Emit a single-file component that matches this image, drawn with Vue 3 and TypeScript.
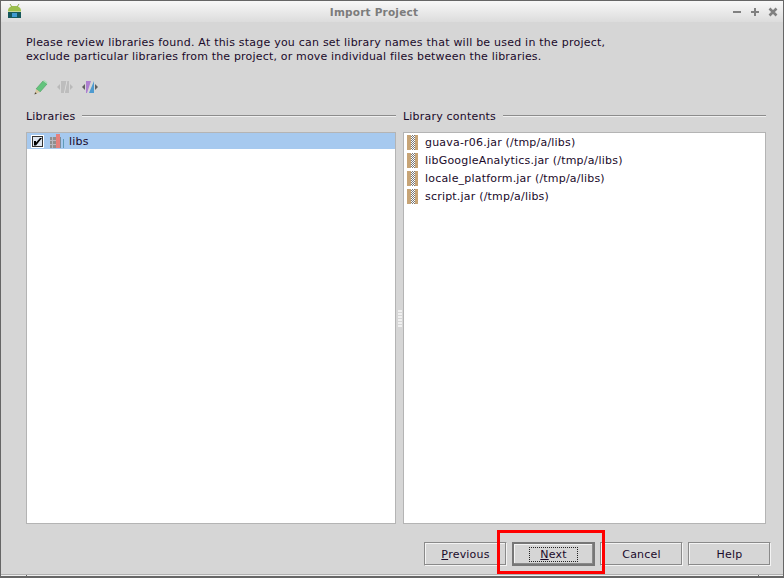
<script setup lang="ts">
const jars: string[] = [
  'guava-r06.jar (/tmp/a/libs)',
  'libGoogleAnalytics.jar (/tmp/a/libs)',
  'locale_platform.jar (/tmp/a/libs)',
  'script.jar (/tmp/a/libs)',
]
</script>

<template>
  <div class="window">
    <header class="titlebar">
      <svg class="logo" width="13" height="14" viewBox="0 0 13 14">
        <path d="M0 7C0 4 2 2 6.500 2S13 4 13 7z" fill="#9cc04c" />
        <path d="M2 0l2 3M11 0L9 3" stroke="#8aa848" />
        <rect x="0" y="7" width="13" height="1" fill="#c8d89a" />
        <rect x="0" y="8" width="13" height="6" fill="#16585c" />
        <rect x="4" y="9" width="5" height="4" fill="#3f9ad0" />
      </svg>
      <span class="title">Import Project</span>
      <div class="controls">
        <svg width="10" height="10" viewBox="0 0 10 10"><rect x="1" y="4" width="8" height="2" fill="#808080" /></svg>
        <svg width="10" height="10" viewBox="0 0 10 10"><path d="M1 4h3V1h2v3h3v2H6v3H4V6H1z" fill="#808080" /></svg>
        <svg width="10" height="10" viewBox="0 0 10 10"><path d="M1.500 1.500l7 7M8.500 1.500l-7 7" stroke="#808080" stroke-width="2.600" /></svg>
      </div>
    </header>

    <main class="content">
      <p class="intro">Please review libraries found. At this stage you can set library names that will be used in the project,<br /><span class="second">exclude particular libraries from the project, or move individual files between the libraries.</span></p>

      <div class="toolbar">
        <svg width="16" height="16" viewBox="0 0 16 16">
          <path d="M4 10l7-8 4 3-7 8z" fill="#62c47c" stroke="#4a9a5e" stroke-width=".6" />
          <path d="M11 2l4 3 .5-1.500L12.500 1z" fill="#a8e0b4" />
          <path d="M4 10l4 3-5 2z" fill="#d8c8a0" />
          <path d="M2.500 15.500l.6-2.300 1.700 1.300z" fill="#4a4030" />
        </svg>
        <svg width="16" height="12" viewBox="0 0 16 12">
          <path d="M0 6l3-3v6z" fill="#b9b9b9" />
          <rect x="4" y="0" width="8" height="12" fill="#bdbdbd" />
          <path d="M7 12l2.500-12h.8L7.800 12z" fill="#e0e0e0" />
          <path d="M16 6l-3-3v6z" fill="#b9b9b9" />
        </svg>
        <svg width="16" height="12" viewBox="0 0 16 12">
          <path d="M0 6l3-3v6z" fill="#606060" />
          <path d="M4 0h5L5 12H4z" fill="#ad7fd0" />
          <path d="M12 0v12H7z" fill="#4e9bd0" />
          <path d="M16 6l-3-3v6z" fill="#606060" />
        </svg>
      </div>

      <div class="panes">
        <section class="pane left">
          <div class="legend"><span>Libraries</span><i class="rule"></i></div>
          <div class="list">
            <div class="lib-row">
              <span class="check">
                <svg width="9" height="9" viewBox="0 0 9 9"><path d="M1 4h2v1.500L7 1h2L3 8.500H1z" fill="#000" /></svg>
              </span>
              <svg class="books" width="14" height="14" viewBox="0 0 14 14">
                <rect x="0" y="3" width="6" height="11" fill="#8f8f8f" />
                <path d="M0 6.500h6M0 10.500h6M2.500 3v11" stroke="#b8b8c0" />
                <rect x="6" y="0" width="4" height="14" fill="#e5807c" />
                <rect x="10" y="3" width="1" height="11" fill="#7a8d9c" />
                <rect x="13" y="5" width="1" height="9" fill="#5d9bb8" />
              </svg>
              <span>libs</span>
            </div>
          </div>
        </section>

        <div class="splitter"><i class="grip"></i></div>

        <section class="pane right">
          <div class="legend"><span>Library contents</span><i class="rule"></i></div>
          <div class="list jars">
            <div v-for="jar in jars" :key="jar" class="jar-row">
              <span class="jar-icon"><i></i></span>
              <span>{{ jar }}</span>
            </div>
          </div>
        </section>
      </div>

      <footer class="buttons">
        <button class="btn"><u>P</u>revious</button>
        <button class="btn default"><span class="focus"><u>N</u>ext</span></button>
        <button class="btn">Cancel</button>
        <button class="btn">Help</button>
      </footer>
    </main>

    <div class="statusline"><i class="tick-a"></i><i class="tick-b"></i></div>
    <div class="highlight"></div>
  </div>
</template>

<style>
html, body { margin: 0; background: #d6d6d6; }
</style>

<style scoped>
.window {
  position: relative;
  width: 784px;
  height: 578px;
  box-sizing: border-box;
  display: flex;
  flex-direction: column;
  overflow: hidden;
  background: #d6d6d6;
  border-top: 1px solid #666;
  border-left: 1px solid #666;
  border-right: 1px solid #666;
  font-family: "DejaVu Sans", sans-serif;
  font-size: 11px;
  color: #1a0a2a;
}
.titlebar {
  height: 21px;
  flex: none;
  display: flex;
  align-items: center;
  justify-content: center;
  position: relative;
  background: linear-gradient(#f8f8f8, #dcdcdc);
}
.logo { position: absolute; left: 7px; top: 3px; }
.title {
  font-weight: 700;
  color: #7c7c7c;
  letter-spacing: .2px;
  font-size: 10.500px;
  margin-right: 36px;
}
.controls {
  position: absolute;
  right: 5px;
  top: 6px;
  display: flex;
  gap: 8px;
}
.content {
  flex: 1;
  display: flex;
  flex-direction: column;
  padding: 0 12px 0 25px;
  min-height: 0;
}
.intro {
  margin: 14px 0 0;
  line-height: 14px;
  letter-spacing: .22px;
  white-space: nowrap;
}
.second { letter-spacing: .177px; }
.toolbar {
  display: flex;
  align-items: center;
  height: 16px;
  margin: 15px 0 0 6px;
  gap: 9px;
}
.panes {
  flex: none;
  display: flex;
  margin-top: 13px;
  height: 416px;
}
.pane { display: flex; flex-direction: column; min-width: 0; }
.left { width: 370px; }
.right { width: 363px; }
.splitter {
  width: 7px;
  display: flex;
  align-items: center;
  justify-content: center;
  padding-top: 5px;
  box-sizing: border-box;
}
.grip {
  flex: none;
  width: 4px;
  height: 17px;
  background-image: radial-gradient(circle at 1px 1px, #f0f0f0 1px, transparent 1px);
  background-size: 2px 3px;
}
.legend {
  height: 16px;
  margin-bottom: 8px;
  display: flex;
  align-items: center;
  gap: 7px;
  letter-spacing: .2px;
  white-space: nowrap;
}
.rule {
  flex: 1;
  height: 1px;
  background: #8c8c8c;
  border-bottom: 1px solid #f0f0f0;
}
.list {
  flex: 1;
  background: #fff;
  border: 1px solid #b4b4b4;
  box-sizing: border-box;
}
.lib-row {
  height: 16px;
  background: #a6c9ef;
  display: flex;
  align-items: center;
  letter-spacing: .2px;
}
.check {
  flex: none;
  width: 11px;
  height: 11px;
  margin-left: 4px;
  border: 1px solid #fff;
  box-shadow: inset 0 0 0 1px #333;
  background: #dfe6ef;
  display: flex;
  align-items: center;
  justify-content: center;
}
.books { flex: none; margin: 0 5px 0 6px; }
.jar-row {
  height: 18px;
  display: flex;
  align-items: center;
  gap: 7px;
  padding-left: 3px;
  letter-spacing: .2px;
}
.jar-icon {
  flex: none;
  width: 11px;
  height: 15px;
  background: #c7a476;
  display: flex;
  justify-content: center;
}
.jar-icon i {
  width: 4px;
  background: repeating-conic-gradient(#777 0 25%, #fff 0 50%) 0 0 / 2px 2px;
}
.buttons {
  display: flex;
  gap: 5px;
  justify-content: flex-end;
  margin-top: 18px;
}
.btn {
  width: 83px;
  height: 24px;
  padding: 0;
  background: #d6d6d6;
  border: 1px solid;
  border-color: #8a8a8a #f4f4f4 #f4f4f4 #8a8a8a;
  font: inherit;
  color: inherit;
  letter-spacing: .2px;
  display: flex;
  align-items: center;
  justify-content: center;
  box-shadow: inset -1px -1px 0 #8a8a8a, inset 1px 1px 0 #f4f4f4;
}
.default {
  border: 2px solid #777;
  box-shadow: inset -1px -1px 0 #8a8a8a, inset 1px 1px 0 #f4f4f4;
}
.focus {
  width: 49px;
  height: 15px;
  line-height: 14px;
  box-sizing: border-box;
  border: 1px dotted #222;
  text-align: center;
}
.statusline {
  flex: none;
  height: 4px;
  box-sizing: border-box;
  background: #666;
  border-top: 1px solid #b0b0b0;
  box-shadow: inset 0 1px 0 #f0f0f0;
  margin-left: -1px;
  margin-right: -1px;
  position: relative;
}
.statusline i {
  position: absolute;
  top: 0;
  width: 1px;
  height: 3px;
  background: #666;
}
.tick-a { left: 26px; }
.tick-b { left: 758px; }
.highlight {
  position: absolute;
  left: 496px;
  top: 529px;
  width: 102px;
  height: 38px;
  border: 3px solid #f00;
  pointer-events: none;
}
</style>
